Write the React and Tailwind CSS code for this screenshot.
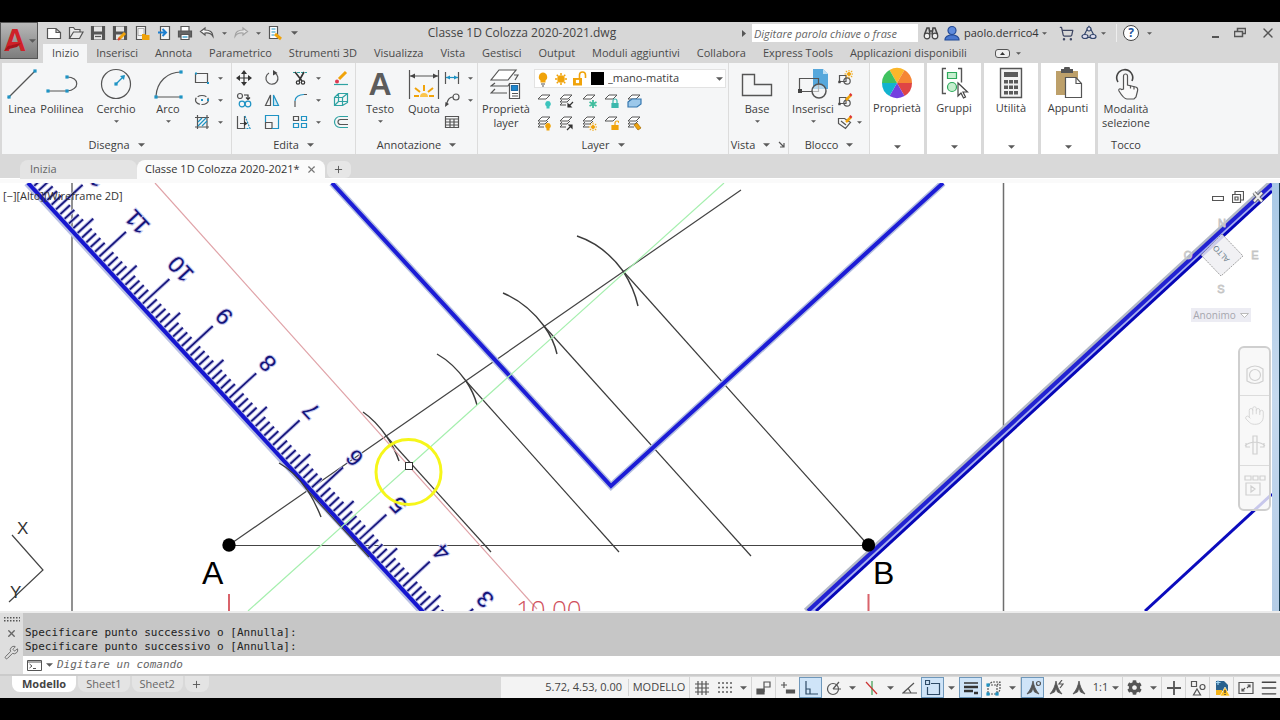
import React from 'react';
import { Wrench, X, Plus, Menu, ShoppingCart, Hand, Pointer } from 'lucide-react';
import { FaCog } from 'react-icons/fa';

const G = '#555';
const B = '#1f93c4';
const T = '#2fa3a3';
const O = '#f0a30a';

const Svg = ({ s = 16, children, className = '' }) => (
  <svg width={s} height={s} viewBox={`0 0 ${s} ${s}`} fill="none" stroke={G} strokeWidth="1.2" className={`shrink-0 ${className}`} aria-hidden="true">
    {children}
  </svg>
);

const Dot = ({ x, y, r = 1.6, c = B }) => (
  <rect x={x - r} y={y - r} width={r * 2} height={r * 2} fill={c} stroke="none" />
);

const Caret = ({ small }) => (
  <svg width={small ? 5 : 7} height={small ? 3 : 4} viewBox="0 0 8 4" fill="#5a5a5a" className="shrink-0" aria-hidden="true">
    <path d="M0 0h8L4 4z" />
  </svg>
);

// quick access toolbar
const NewFile = () => <Svg><path d="M1.5 3.5h8.5l4.5 4v6h-13zM10 3.5v4h4.5" fill="#fff" /></Svg>;
const OpenFile = () => <Svg><path d="M1.5 13.5v-11h4l1.5 2h5v3M1.5 13.5l4-6.5h9.5l-3.5 6.5z" fill="#e9e9e9" /></Svg>;
const Save = () => (
  <Svg><path d="M1.5 1.5h13v13h-13z" fill="#555" /><path d="M4 1.5h8v5H4zM4 9.5h8v5H4z" fill="#e4e4e4" stroke="none" /><path d="M5 11.5h6" /></Svg>
);
const SaveAs = () => (
  <Svg><path d="M1.5 1.5h13v13h-13z" fill="#555" /><path d="M4 1.5h8v5H4zM4 9.5h8v5H4z" fill="#e4e4e4" stroke="none" /><path d="M7 14l6-6" stroke={O} strokeWidth="3" /><path d="M6 15l2-2" stroke="#d43" strokeWidth="2" /></Svg>
);
const OpenWeb = () => (
  <Svg><path d="M2.5 1.5h9v13h-9z" fill="#f4f4f4" /><path d="M4 3.5h6v7H4z" stroke="#999" strokeWidth="0.8" /><path d="M8 9h3l1 1h3.5v5H8z" fill={O} stroke="none" /></Svg>
);
const SaveWeb = () => (
  <Svg><path d="M4.5 1.5h9v13h-9z" fill="#f4f4f4" /><path d="M2 7.5h7M6.500 4l3.500 3.500L6.500 11" stroke="#1d7fd0" strokeWidth="2" /></Svg>
);
const Print = () => (
  <Svg><path d="M4 6V1.5h8V6" fill="#fff" /><path d="M1.5 6h13v6h-13z" fill="#666" /><path d="M4 9.5h8v5H4z" fill="#fff" /><path d="M5.5 12h5" stroke={B} /></Svg>
);
const Undo = ({ off }) => (
  <Svg className={off ? '-scale-x-100 opacity-40' : ''}><path d="M6 3L1.5 6.5 6 10V8c3.5-.5 6 0 8 3.5C14 7 10.5 5 6 5z" fill="#f5f5f5" /></Svg>
);
const Match = () => (
  <Svg><path d="M2.5 1.5h8v12h-8z" fill="#fff" /><path d="M4.5 4h4M4.5 7h4M4.5 10h3" stroke={B} /><path d="M8 9l6 5" stroke={O} strokeWidth="3" /></Svg>
);

// draw
const LineIcon = () => <Svg s={32}><path d="M2 30L29 3" /><Dot x={3} y={29} /><Dot x={29} y={3} /></Svg>;
const PolyIcon = () => <Svg s={32}><path d="M2 23h19c13-1 13-14 0-14" /><Dot x={2} y={23} /><Dot x={21} y={23} /><Dot x={21} y={9} /></Svg>;
const CircleIcon = () => (
  <Svg s={32}><circle cx="16" cy="16" r="14.5" /><path d="M16 16l8-8" stroke={B} /><path d="M25 7l-1 5-4-4z" fill={B} stroke="none" /><Dot x={16} y={16} /></Svg>
);
const ArcIcon = () => <Svg s={32}><path d="M4 28C5 14 15 4 29 4M4 29h25" /><Dot x={4} y={29} /><Dot x={29} y={29} /><Dot x={29} y={4} /></Svg>;
const RectIcon = () => <Svg><path d="M1.5 3.5h12v9h-12z" /><Dot x={2} y={3.5} r={1} /><Dot x={14} y={13} r={1} /></Svg>;
const EllipseIcon = () => <Svg><ellipse cx="8" cy="8" rx="6.5" ry="4.5" strokeDasharray="9 1.5" /><Dot x={8} y={8} r={1} /><Dot x={14} y={8} r={1} /></Svg>;
const HatchIcon = () => <Svg><path d="M3.5 1v14M13 1v14M1 3.5h14M1 13h14" /><path d="M4 8l4-4M4 12l8-8M8 12l5-5" stroke={B} /></Svg>;

// modify
const MoveIcon = () => (
  <Svg><path d="M8 2v12M2 8h12" stroke="#333" /><path d="M8 0l3 4H5zM8 16l3-4H5zM0 8l4-3v6zM16 8l-4-3v6z" fill="#333" stroke="none" /></Svg>
);
const RotateIcon = () => <Svg><path d="M10.5 2.8A6 6 0 1 1 5 3" /><path d="M9 0v5.5L13.5 3z" fill="#444" stroke="none" /></Svg>;
const TrimIcon = () => (
  <Svg><path d="M1 2.5h14" stroke={T} strokeDasharray="3 1" /><path d="M3 2l7 9M12 2L7 11" stroke="#333" strokeWidth="1.6" /><circle cx="6" cy="12.5" r="1.7" stroke="#333" /><circle cx="11" cy="12.5" r="1.7" stroke="#333" /></Svg>
);
const CopyIcon = () => (
  <Svg><circle cx="4" cy="4" r="2.5" /><circle cx="6" cy="12" r="2.8" stroke={B} /><circle cx="12" cy="12" r="2.8" stroke={B} /><path d="M8 3h4v4M10 5.5l2 2 2-2" stroke="#333" /></Svg>
);
const MirrorIcon = () => <Svg><path d="M6.5 3v10.5H1.5z" /><path d="M9.5 3v10.5h5z" stroke={B} fill="#cfe9f5" /></Svg>;
const FilletIcon = () => <Svg><path d="M3 15V9M12 2.5h3" /><path d="M3 9c0-4 4-6.5 9-6.5" stroke={B} /></Svg>;
const StretchIcon = () => <Svg><path d="M1.5 2v12.5h7V2M4 9.5h5" /><path d="M8 7l3.5 2.5L8 12z" fill="#333" stroke="none" /><path d="M9 2l5 12.5H9" stroke={B} strokeDasharray="2 1" /></Svg>;
const ScaleIcon = () => <Svg><path d="M1.5 8.5h6.5v6H1.5z" /><path d="M1.5 8V1.5h13v13H8" stroke={B} /></Svg>;
const ArrayIcon = () => <Svg><path d="M1.5 2.5h5v4h-5z" /><path d="M9.5 2.5h5v4h-5zM1.5 9.5h5v4h-5zM9.5 9.5h5v4h-5z" stroke={B} /></Svg>;
const EraseIcon = () => <Svg><path d="M6 9l7-7" stroke={O} strokeWidth="3" /><circle cx="4" cy="11.5" r="2" fill="#dc3b52" stroke="none" /><path d="M1 14.5h14" stroke={T} /></Svg>;
const SolidIcon = () => <Svg><path d="M1.5 5.5h8v8h-8zM1.5 5.5l4-4h9v9l-5 3M9.5 5.5l5-4M5.5 1.5v8M5.5 9.5h9M5.5 9.5l-4 4" stroke={T} /></Svg>;
const OffsetIcon = () => <Svg><path d="M15 2.5H7a5.5 5.5 0 0 0 0 11h8" stroke={T} /><path d="M15 5.5H7.5a2.5 2.5 0 0 0 0 5H15" /></Svg>;

// annotate
const TextIcon = () => (
  <Svg s={32} className="overflow-visible"><text x="16" y="27" textAnchor="middle" fontSize="32" fontWeight="700" fontFamily="Liberation Sans, sans-serif" fill="#5c5c5c" stroke="none">A</text></Svg>
);
const DimIcon = () => (
  <Svg s={32}>
    <path d="M1.5 2v29M30.5 2v29M2 8h28" />
    <path d="M2 8l5-2.5v5zM30 8l-5-2.5v5z" fill="#444" stroke="none" />
    <path d="M6 28h5M21 28h5M7 20l5 4M25 20l-5 4M16 17v6" stroke={O} strokeWidth="2" />
    <path d="M12 29a4 4 0 0 1 8 0" fill="#fbc44a" stroke="none" />
  </Svg>
);
const LinearIcon = () => <Svg><path d="M1.5 2v12M14.5 2v12" /><path d="M2 7.5h12" stroke={B} /><path d="M2 7.5l4-2v4zM14 7.5l-4-2v4z" fill={B} stroke="none" /></Svg>;
const LeaderIcon = () => <Svg><circle cx="12" cy="5" r="3" /><path d="M9 5C5 5 4 8 2.5 12" /><path d="M1 15l.5-5 3.5 2z" fill="#444" stroke="none" /></Svg>;
const TableIcon = () => <Svg><path d="M1.5 2.5h13v11h-13zM1.5 5h13M1.5 8h13M1.5 11h13M6 5v8.5M10 5v8.5" /></Svg>;

// layers
const LayerPropsIcon = () => (
  <Svg s={32}>
    <path d="M9 2h17l-8 10H1z" fill="#fff" /><path d="M24 7h4l-3 5M5 15l-4 3h17l2-3M5 21l-4 4h16" />
    <path d="M19.5 15.5h10v15h-10z" fill="#fff" /><path d="M21.5 17.5h6v5h-6z" fill="#1d86cc" stroke="#1d6ca8" /><path d="M22 25.5h6M22 28h6" />
  </Svg>
);
const Layer = ({ many, children }) => (
  <Svg><g transform="translate(1 1)"><path d="M5 1h8l-4 4H1z" fill="#fff" strokeWidth="1" />{many && <path d="M3 6L1 8h7l3-3M3 9l-2 2h6" strokeWidth="1" />}</g>{children}</Svg>
);
const Mark = ({ c }) => <path d="M12 8a3 3 0 0 1 1.5 5.500v2h-3v-2A3 3 0 0 1 12 8z" fill={c} stroke="none" />;
const Flake = ({ c }) => <path d="M12 7v8M8.5 9l7 4M15.5 9l-7 4" stroke={c} strokeWidth="1.8" />;
const Lock = ({ c, open }) => <g stroke={c}><path d={open ? 'M12 10V8a2 2 0 0 1 4 0' : 'M10 10V8a2 2 0 0 1 4 0v2'} /><path d="M9 10.5h6v4H9z" fill={c} /></g>;
const ArrowMark = ({ up }) => <path d={up ? 'M9 15l4-4M11 10h3v3z' : 'M15 9l-4 4M10 11v3h3z'} stroke="#333" fill="#333" />;
const BoxMark = () => <path d="M2 9l4-3h9v5l-4 3H2z" fill="#9cc8ea" stroke="#3678b0" />;
const TagMark = () => <path d="M8 10l4 5 3-2-4-5z" fill={O} stroke="#a97310" strokeWidth="0.8" />;

const Sun = ({ x = 8, y = 8, r = 3 }) => (
  <g stroke={O} strokeWidth={r > 2 ? 1.5 : 1}>
    <circle cx={x} cy={y} r={r} fill={O} />
    {[0, 45, 90, 135, 180, 225, 270, 315].map((a) => (
      <path key={a} d={`M${x} ${y - r - 1}v-2`} transform={`rotate(${a} ${x} ${y})`} />
    ))}
  </g>
);

// block and view
const BaseIcon = () => <Svg s={32}><path d="M1.5 6.5h12v10h17v11h-29z" strokeWidth="1.4" /></Svg>;
const InsertIcon = () => (
  <Svg s={32}>
    <path d="M16 1h10l5 5v15H16z" fill="#56a8dc" stroke="none" /><path d="M26 1v5h5z" fill="#bfe0f4" stroke="none" />
    <path d="M2.5 10.5h19v13h-19z" /><circle cx="22" cy="23" r="7" fill="#f5f6f7" fillOpacity="0.6" strokeWidth="1.5" /><Dot x={3} y={23} c="#444" r={2} />
  </Svg>
);
const BlockBase = ({ children }) => <Svg><path d="M2.5 5.5H9v6H2.5z" /><circle cx="10" cy="11" r="3.2" /><Dot x={2.5} y={12} r={1.2} c="#444" />{children}</Svg>;
const Pencil = () => <><path d="M9 8l5-5" stroke={O} strokeWidth="2.5" /><path d="M13 3.5l1.500-1.500" stroke="#d33" strokeWidth="2.5" /></>;
const TagIcon = () => <Svg><path d="M1.5 4.5h6l6 4-5 6-7-5zM4 7l5 4" /><Pencil /></Svg>;

const wheel = ['#fbb62b', '#f58634', '#df4545', '#7440e0', '#12b3cf', '#3fc25f'];
const WheelIcon = () => (
  <Svg s={32}>
    {wheel.map((c, i) => (
      <path key={c} d="M16 16L8.5 3A15 15 0 0 1 23.5 3z" fill={c} stroke="none" transform={`rotate(${i * 60} 16 16)`} />
    ))}
  </Svg>
);
const GroupIcon = () => (
  <Svg s={32}>
    <path d="M8 1.5H4.5v25H8M20 1.5h3.5v14M20 26.5h2" strokeWidth="1.4" />
    <path d="M9.5 5.5h9v6h-9z" fill="#c6efcf" stroke="#2eaa5c" /><circle cx="14" cy="20" r="4.5" fill="#c6efcf" stroke="#2eaa5c" />
    <path d="M20 16v13l3-3 2.5 5 2-1-2.5-5h4.5z" fill="#fff" stroke="#444" />
  </Svg>
);
const CalcIcon = () => (
  <Svg s={32}>
    <path d="M5.5 1.5h21v29h-21z" fill="#f2f2f2" strokeWidth="1.4" /><path d="M9 5h14v5H9z" fill="#5a5a5a" stroke="none" />
    {[13, 18.5, 24].map((y) => [9, 14, 19].map((x) => <path key={`${x}-${y}`} d={`M${x} ${y}h4v3.5h-4z`} fill="#5a5a5a" stroke="none" />))}
  </Svg>
);
const ClipIcon = () => (
  <Svg s={32}>
    <path d="M4 4h22v24H4z" fill="#bda06a" stroke="none" /><path d="M9 2h3a3 3 0 0 1 6 0h3v4H9z" fill="#555" stroke="none" />
    <path d="M13.5 10.5H24l5.5 6v14h-16z" fill="#fff" /><path d="M24 10.5v6h5.5" />
  </Svg>
);

const bigW = { sm: 'w-10', md: 'w-12', lg: 'w-14' };
const Big = ({ icon, label, sub, caret, w = 'md' }) => (
  <button className={`${bigW[w]} flex flex-col items-center pt-[5px] text-[11px] leading-[14px]`}>
    {icon}
    <span className="mt-0.5">{label}</span>
    {sub && <span>{sub}</span>}
    {caret && <span className="pt-1"><Caret small /></span>}
  </button>
);

const Small = ({ icon, caret, label }) => (
  <button aria-label={label} className="flex h-[22px] items-center gap-2">
    {icon}
    {caret && <Caret small />}
  </button>
);

const Panel = ({ title, w, children, launcher }) => (
  <section className={`${w} flex shrink-0 flex-col border-r border-[#dcdcdc] bg-[#f5f6f7]`}>
    <div className="flex flex-1">{children}</div>
    <h2 className="flex h-[18px] items-center justify-center gap-2 text-[11px]">
      {title}
      <Caret />
      {launcher && <Svg s={8}><path d="M1 1l5 5M6 2v4H2" /></Svg>}
    </h2>
  </section>
);

const DropPanel = ({ icon, label }) => (
  <button className="mr-[3px] flex w-[54px] shrink-0 flex-col items-center bg-white pt-1 pb-[5px] text-[11px] leading-[14px]">
    {icon}
    <span className="mt-0.5 flex-1">{label}</span>
    <Caret />
  </button>
);

const menuTabs = ['Inizio', 'Inserisci', 'Annota', 'Parametrico', 'Strumenti 3D', 'Visualizza', 'Vista', 'Gestisci', 'Output', 'Moduli aggiuntivi', 'Collabora', 'Express Tools', 'Applicazioni disponibili'];

const quick = [
  ['Nuovo', <NewFile />], ['Apri', <OpenFile />], ['Salva', <Save />], ['Salva con nome', <SaveAs />],
  ['Apri da Web', <OpenWeb />], ['Salva su Web', <SaveWeb />], ['Stampa', <Print />], ['Annulla', <Undo />],
];

const Header = () => (
  <header className="flex bg-[#d7d7d7]">
    <button aria-label="Menu applicazione" className="flex h-[37px] w-[38px] shrink-0 items-center justify-center border border-[#555] bg-gradient-to-b from-[#b9b9b9] to-[#7d7d7d]">
      <svg width="27" height="35" viewBox="0 0 27 35" className="overflow-visible" aria-hidden="true">
        <text x="13" y="28" textAnchor="middle" fontSize="31" fontWeight="700" fontFamily="Liberation Sans, sans-serif" fill="#cf2229">A</text>
        <path d="M2 28l4-5 13-3-4 4-8 2z" fill="#a5151c" />
      </svg>
      <Caret />
    </button>
    <div className="min-w-0 flex-1">
      <div className="flex h-[22px] items-center">
        <div className="flex w-[264px] shrink-0 items-center pl-[5px]">
          {quick.map(([label, icon]) => (
            <button key={label} aria-label={label} className="flex w-[22px] justify-center">{icon}</button>
          ))}
          <span className="flex w-3 justify-center"><Caret small /></span>
          <button aria-label="Ripeti" className="flex w-[22px] justify-center"><Undo off /></button>
          <span className="flex w-3 justify-center"><Caret small /></span>
          <button aria-label="Corrispondenza" className="flex w-[22px] justify-center"><Match /></button>
          <button aria-label="Personalizza" className="flex w-4 justify-center"><Caret /></button>
        </div>
        <h1 className="flex-1 text-center text-[12px] text-[#444]">Classe 1D Colozza 2020-2021.dwg</h1>
        <div className="flex w-[538px] shrink-0 items-center">
          <svg width="4" height="7" viewBox="0 0 4 7" aria-hidden="true"><path d="M0 0l4 3.5L0 7z" fill="#555" /></svg>
          <input aria-label="Cerca" placeholder="Digitare parola chiave o frase" className="ml-1.5 h-[18px] w-[166px] bg-white px-0.5 text-[11px] italic outline-none placeholder:text-[#666]" />
          <button aria-label="Trova" className="ml-1 flex w-[18px] justify-center">
            <Svg><path d="M1.5 9.5L4 3h2l1 6.5M14.5 9.5L12 3h-2L9 9.5M7 6h2" stroke="#444" strokeWidth="1.6" /><circle cx="4" cy="11" r="2.8" fill="#eee" stroke="#444" /><circle cx="12" cy="11" r="2.8" fill="#eee" stroke="#444" /></Svg>
          </button>
          <button className="ml-1 flex w-[98px] items-center gap-1 text-[11px] text-[#333]">
            <Svg><path d="M1 15c0-4 3-4 5-5h4c2 1 5 1 5 5z" fill="#4a78cf" stroke="#234a96" /><circle cx="8" cy="5.5" r="4" fill="#5f8bdc" stroke="#234a96" /></Svg>
            paolo.derrico4
          </button>
          <span className="mr-2"><Caret small /></span>
          <button aria-label="Carrello" className="ml-1 w-4"><ShoppingCart size={15} color="#3f4763" /></button>
          <button aria-label="Autodesk" className="ml-1.5 w-4">
            <Svg><path d="M8 1.5l3 5 3 6H2l3-6z" stroke="#33466b" /><circle cx="8" cy="4" r="2" fill="#dde" stroke="#33466b" /><ellipse cx="4" cy="11.5" rx="3" ry="2" fill="#dde" stroke="#33466b" /><ellipse cx="12" cy="11.5" rx="3" ry="2" fill="#dde" stroke="#33466b" /></Svg>
          </button>
          <span className="ml-1"><Caret small /></span>
          <span className="ml-2.5 h-[18px] w-px bg-[#eee]" />
          <button aria-label="Guida" className="ml-1.5 flex h-4 w-4 items-center justify-center rounded-full border border-[#444] bg-white text-[12px] font-bold text-[#23539c]">?</button>
          <span className="ml-2"><Caret small /></span>
          <div className="ml-auto flex items-center gap-3.5 pr-1">
            <button aria-label="Riduci" className="pt-2"><Svg s={8}><path d="M0 4h7" strokeWidth="2" /></Svg></button>
            <button aria-label="Ripristina"><Svg s={12}><path d="M3.5 4V1.5h8v5H9M.5 4.5h8v5h-8z" strokeWidth="1.5" /></Svg></button>
            <button aria-label="Chiudi"><X size={16} color="#555" /></button>
          </div>
        </div>
      </div>
      <nav className="flex h-[19px] items-center pl-[5px]">
        {menuTabs.map((t, i) => (
          <button key={t} className={`h-[19px] whitespace-nowrap pr-2 pl-[9px] text-[11px] text-[#4a4a4a] ${i === 0 ? 'bg-[#f5f6f7]' : ''}`}>{t}</button>
        ))}
        <button aria-label="Riduci barra" className="ml-5 flex items-center gap-1.5">
          <svg width="15" height="9" viewBox="0 0 15 9" aria-hidden="true"><rect x="0.5" y="0.5" width="14" height="8" rx="2.5" fill="#eee" stroke="#555" /><path d="M5 6l2.5-3L10 6z" fill="#333" /></svg>
          <Caret small />
        </button>
      </nav>
    </div>
  </header>
);

const layerTools = [
  <Layer><Mark c="#3cc4bd" /></Layer>, <Layer many><ArrowMark /></Layer>, <Layer><Flake c="#3fbd9d" /></Layer>, <Layer><Lock c="#3cb8ad" /></Layer>, <Layer many><BoxMark /></Layer>,
  <Layer many><Mark c={O} /></Layer>, <Layer many><ArrowMark up /></Layer>, <Layer many><Sun x={12} y={12} r={1.5} /></Layer>, <Layer><Lock c={O} open /></Layer>, <Layer many><TagMark /></Layer>,
];

const Ribbon = () => (
  <div className="flex h-[91px] bg-[#d9d9d9] pr-0.5 pl-0.5 text-[#3c3c3c]">
    <Panel title="Disegna" w="w-[230px]">
      <Big icon={<LineIcon />} label="Linea" w="sm" />
      <Big icon={<PolyIcon />} label="Polilinea" w="sm" />
      <span className="w-1.5" />
      <Big icon={<CircleIcon />} label="Cerchio" caret w="lg" />
      <Big icon={<ArcIcon />} label="Arco" caret w="md" />
      <div className="ml-0.5 pt-1">
        <Small label="Rettangolo" icon={<RectIcon />} caret />
        <Small label="Ellisse" icon={<EllipseIcon />} caret />
        <Small label="Tratteggio" icon={<HatchIcon />} caret />
      </div>
    </Panel>
    <Panel title="Edita" w="w-[124px]">
      <div className="flex gap-3 pt-1 pl-1">
        <div>
          <Small label="Sposta" icon={<MoveIcon />} /><Small label="Copia" icon={<CopyIcon />} /><Small label="Stira" icon={<StretchIcon />} />
        </div>
        <div>
          <Small label="Ruota" icon={<RotateIcon />} /><Small label="Specchio" icon={<MirrorIcon />} /><Small label="Scala" icon={<ScaleIcon />} />
        </div>
        <div>
          <Small label="Taglia" icon={<TrimIcon />} caret /><Small label="Raccorda" icon={<FilletIcon />} caret /><Small label="Serie" icon={<ArrayIcon />} caret />
        </div>
        <div>
          <Small label="Cancella" icon={<EraseIcon />} /><Small label="Esplodi" icon={<SolidIcon />} /><Small label="Offset" icon={<OffsetIcon />} />
        </div>
      </div>
    </Panel>
    <Panel title="Annotazione" w="w-[122px]">
      <Big icon={<TextIcon />} label="Testo" caret w="md" />
      <Big icon={<DimIcon />} label="Quota" w="sm" />
      <div className="pt-1">
        <Small label="Lineare" icon={<LinearIcon />} caret />
        <Small label="Direttrice" icon={<LeaderIcon />} caret />
        <Small label="Tabella" icon={<TableIcon />} />
      </div>
    </Panel>
    <Panel title="Layer" w="w-[251px]">
      <Big icon={<LayerPropsIcon />} label="Proprietà" sub="layer" w="lg" />
      <div className="flex-1 pr-0.5">
        <div className="mt-1.5 mb-0.5 flex h-[19px] items-center gap-0.5 border border-[#e2e2e2] bg-white">
          <Svg><path d="M8 1.5a4.5 4.5 0 0 1 2.5 8v2h-5v-2a4.5 4.500 0 0 1 2.5-8z" fill={O} stroke="none" /><path d="M6 13h4M7 15h2" /></Svg>
          <Svg><Sun r={3} /></Svg>
          <Svg><path d="M8.5 7V4a3 3 0 0 1 6 0v3" stroke={O} strokeWidth="1.6" /><path d="M2 7h9v7.5H2z" fill={O} stroke="none" /><Dot x={6.5} y={10.5} c="#fff" /></Svg>
          <span className="ml-0.5 h-[13px] w-[13px] bg-black" />
          <select aria-label="Layer corrente" className="ml-0.5 min-w-0 flex-1 appearance-none bg-transparent text-[11px] outline-none">
            <option>_mano-matita</option>
          </select>
          <span className="pr-0.5"><Caret /></span>
        </div>
        <div className="grid w-28 grid-cols-5">
          {layerTools.map((icon, i) => (
            <button key={i} aria-label={`Strumento layer ${i + 1}`} className="flex h-[22px] items-center pl-0.5">{icon}</button>
          ))}
        </div>
      </div>
    </Panel>
    <Panel title="Vista" w="w-[60px]" launcher>
      <Big icon={<BaseIcon />} label="Base" caret w="lg" />
    </Panel>
    <Panel title="Blocco" w="w-[81px]">
      <Big icon={<InsertIcon />} label="Inserisci" caret w="md" />
      <div className="pt-1">
        <Small label="Crea" icon={<BlockBase><Sun x={12} y={4} r={1.5} /></BlockBase>} />
        <Small label="Modifica" icon={<BlockBase><Pencil /></BlockBase>} />
        <div className="flex h-[22px] items-center"><Small label="Attributi" icon={<TagIcon />} /><span className="pl-1"><Caret small /></span></div>
      </div>
    </Panel>
    <DropPanel icon={<WheelIcon />} label="Proprietà" />
    <DropPanel icon={<GroupIcon />} label="Gruppi" />
    <DropPanel icon={<CalcIcon />} label="Utilità" />
    <DropPanel icon={<ClipIcon />} label="Appunti" />
    <div className="min-w-0 flex-1 bg-[#f5f6f7]">
      <section className="flex h-full w-14 flex-col">
        <div className="flex flex-1 justify-center">
          <button className="flex flex-col items-center pt-[5px] text-[11px] leading-[14px]">
            <Svg s={32}>
              <path d="M8 14a8 8 0 1 1 14-1" stroke="#444" strokeWidth="1.6" />
              <path d="M13.500 21V8a2 2 0 0 1 4 0v9l8 2c2 .5 2.500 2 2 4l-1.500 6-2 2h-7c-3 0-5-3-8-8-1-2 1-3 2.500-1.500z" fill="#fafafa" />
              <path d="M20.500 17.500v3M24 18.500v3" />
            </Svg>
            <span className="mt-0.5">Modalità</span>
            <span>selezione</span>
          </button>
        </div>
        <h2 className="flex h-[18px] items-center justify-center text-[11px]">Tocco</h2>
      </section>
    </div>
  </div>
);

const FileTabs = () => (
  <div className="bg-[#d9d9d9] pt-1.5">
    <div className="flex h-[19px] items-center border-b border-white pl-5 text-[11px]">
      <button className="h-[19px] w-[117px] rounded-t-lg bg-[#e4e4e4] pl-2.5 text-left text-[#666]">Inizia</button>
      <button className="flex h-[19px] items-center gap-1.5 rounded-t-lg bg-[#fbfbfb] px-2 text-[#333]">
        Classe 1D Colozza 2020-2021* <X size={11} strokeWidth={2.5} color="#777" />
      </button>
      <button aria-label="Nuovo disegno" className="ml-0.5 flex h-[17px] w-6 items-center justify-center rounded-md bg-[#e6e6e6]"><Plus size={11} color="#555" /></button>
    </div>
    <div className="h-1 bg-[#fafafa]" />
  </div>
);

// ruler ticks: ten per unit, every fifth and tenth one longer
const numerals = [12, 11, 10, 9, 8, 7, 6, 5, 4, 3];
const ticks = Array.from({ length: 110 }, (_, i) => {
  const k = i - 20;
  const x = 97.3 + k * 4.34;
  const y = 258.4 + k * 4.71;
  const len = k % 10 === 0 ? 39 : k % 5 === 0 ? 24 : 16;
  return { x, y, x2: x + len * 0.735, y2: y - len * 0.678 };
});

const arms = ['M623 271L868 545', 'M544 326L751 556', 'M466 381L619 552', 'M387 437L491 552', 'M308 491L369 557'];
const arcs = [
  'M577 236Q604 245 623 271Q634 288 638 306', 'M503 293Q527 303 544 326Q554 340 557 354', 'M437 354Q453 363 466 381Q474 393 477 405',
  'M363 412Q376 421 387 437Q395 449 399 461', 'M279 463Q294 471 308 491Q316 504 321 517',
];

const Drawing = () => (
  <svg viewBox="0 183 1272 428" preserveAspectRatio="xMinYMin slice" className="block h-full w-full" fill="none">
    <path d="M72 183V611M1003.5 183V611" stroke="#6e6e6e" strokeWidth="1.5" />
    <path d="M229 545L741 190M229 545.5H868" stroke="#444" strokeWidth="1.2" />

    <g stroke="#b9b9e6" strokeWidth="3.6">
      {ticks.map((t, i) => <line key={i} x1={t.x} y1={t.y} x2={t.x2} y2={t.y2} />)}
    </g>
    <g stroke="#14147a" strokeWidth="1.7">
      {ticks.map((t, i) => <line key={i} x1={t.x} y1={t.y} x2={t.x2} y2={t.y2} />)}
    </g>
    <path d="M27 183L423 613" stroke="#b9c0e4" strokeWidth="7" />
    <path d="M28 183L424 613" stroke="#1616d0" strokeWidth="4" />
    {numerals.map((n) => (
      <text
        key={n}
        transform={`translate(${137 + (11 - n) * 43.5} ${222 + (11 - n) * 47.2}) rotate(227.3)`}
        y="8"
        textAnchor="middle"
        fontSize="23"
        fontFamily="Liberation Sans, sans-serif"
        fill="#14147a"
        stroke="#c9c9ee"
        strokeWidth="2"
        paintOrder="stroke"
      >
        {n}
      </text>
    ))}
    {arms.map((d) => <path key={d} d={d} stroke="#3c3c3c" strokeWidth="1.2" />)}
    {arcs.map((d) => <path key={d} d={d} stroke="#3c3c3c" strokeWidth="1.4" />)}

    <path d="M332 183L611 486L943 183" stroke="#b4bfe0" strokeWidth="7" />
    <path d="M332 183L611 486L943 183" stroke="#1c1cd6" strokeWidth="4" />
    <path d="M806 611L1272 182" stroke="#b3b9c6" strokeWidth="6" />
    <path d="M811 611L1272 187" stroke="#a9b0f0" strokeWidth="6" />
    <path d="M808 611L1272 184" stroke="#2222d2" strokeWidth="4" />
    <path d="M816 611L1272 191" stroke="#0606b8" strokeWidth="3" />
    <path d="M1145 611L1272 494" stroke="#0b0bbd" strokeWidth="3" />

    <path d="M155 183L537 609" stroke="#e0a3a8" strokeWidth="1.2" />
    <path d="M248 611L724 183" stroke="#a5efae" strokeWidth="1.2" />
    <path d="M229 594V611M868.5 594V611" stroke="#d9636b" strokeWidth="2" />
    <text x="516" y="619" fontSize="26" fontWeight="300" fontFamily="Open Sans, sans-serif" fill="#d0505c">10.00</text>

    <circle cx="229" cy="545" r="6.7" fill="#000" />
    <circle cx="868.5" cy="545" r="6.7" fill="#000" />
    <text x="202" y="584" fontSize="32" fontFamily="Liberation Sans, sans-serif" fill="#000">A</text>
    <text x="873" y="584" fontSize="32" fontFamily="Liberation Sans, sans-serif" fill="#000">B</text>

    <circle cx="408.5" cy="472" r="32.5" stroke="#f6f61a" strokeWidth="3" />
    <rect x="405.5" y="462.5" width="7" height="7" fill="#fff" stroke="#333" />

    <path d="M12 535L43 570L9 602" stroke="#444" strokeWidth="1.2" />
    <text x="17" y="534" fontSize="17" fontFamily="Liberation Sans, sans-serif" fill="#333">X</text>
    <text x="10" y="598" fontSize="17" fontFamily="Liberation Sans, sans-serif" fill="#333">Y</text>
  </svg>
);

const ViewCube = () => (
  <svg width="80" height="86" viewBox="0 0 80 86" fontFamily="Liberation Sans, sans-serif" fontSize="11" fill="#f2f2f2" stroke="#c4c4c4" strokeWidth="0.8" textAnchor="middle" aria-hidden="true">
    <text x="40" y="13">N</text>
    <text x="6" y="45">O</text>
    <text x="73" y="45">E</text>
    <text x="39" y="79">S</text>
    <path d="M40 20L61 42L39 62L19 41z" fill="#efeff2" fillOpacity="0.85" stroke="#8a8a8a" strokeDasharray="2 1" />
    <text transform="translate(39 40) rotate(227)" y="3" fontSize="8" fill="#6f7f8c" stroke="none">ALTO</text>
  </svg>
);

const NavBar = () => (
  <div className="flex h-[165px] w-[33px] flex-col items-center justify-around rounded-md border-2 border-[#cfcfcf] bg-[#f6f6f6]/80 pt-3 pb-2 text-[#d2d2d2]">
    <button aria-label="Ruota di navigazione"><Svg s={22}><g stroke="#d0d0d0"><path d="M3 5q8-6 16 0v12q-8 5-16 0z" /><circle cx="11" cy="11" r="5.5" /></g></Svg></button>
    <span className="h-px w-full bg-[#dcdcdc]" />
    <button aria-label="Pan"><Hand size={21} strokeWidth={1} /></button>
    <button aria-label="Zoom"><Svg s={22}><g stroke="#d0d0d0"><path d="M9 2h4v18H9zM1 12c4-5 16-5 20 0M2 9v4h4M20 9v4h-4" /></g></Svg></button>
    <span className="h-px w-full bg-[#dcdcdc]" />
    <button aria-label="Motion"><Svg s={22}><g stroke="#d0d0d0"><path d="M1 1h6v4H1zM9 1h5v4H9zM16 1h5v4h-5zM2 8h14v12H2zM7 11l4 3-4 3z" /></g></Svg></button>
  </div>
);

const Canvas = () => (
  <main className="relative flex min-h-0 flex-1 bg-white">
    <div className="min-w-0 flex-1 overflow-hidden"><Drawing /></div>
    <div className="w-[7px] bg-gradient-to-b from-[#a9c9e6] via-[#c5d9ee] to-[#b4cce6]" />
    <div className="w-px bg-[#173c50]" />
    <div className="absolute top-1.5 left-[3px] flex text-[11px] leading-[14px] text-[#333]">
      <button>[−]</button><button>[Alto]</button><button>[Wireframe 2D]</button>
    </div>
    <div className="absolute top-2 right-4 flex items-center gap-2">
      <button aria-label="Riduci vista"><Svg s={12}><path d="M.5 5.5h11v4H.5z" fill="#fff" /></Svg></button>
      <button aria-label="Ingrandisci vista"><Svg s={12}><path d="M3 3V.5h8.5V9H9M.5 3.5h8v8h-8zM3 6h3v3H3z" fill="#fff" /></Svg></button>
      <button aria-label="Chiudi vista"><Svg s={12}><path d="M2 1.5l8 9M10 1.5l-8 9" stroke="#666" strokeWidth="4" /><path d="M2 1.5l8 9M10 1.5l-8 9" stroke="#eee" strokeWidth="2" /></Svg></button>
    </div>
    <div className="absolute top-[31px] right-[18px]"><ViewCube /></div>
    <button className="absolute top-[125px] right-[29px] flex h-[14px] w-[60px] items-center justify-center gap-1 bg-[#ececf3] text-[10px] text-[#a6a6ae]">
      Anonimo <svg width="9" height="5" viewBox="0 0 9 5" fill="#fff" stroke="#bbb" aria-hidden="true"><path d="M.5.5h8L4.5 4.5z" /></svg>
    </button>
    <div className="absolute top-[163px] right-[9px]"><NavBar /></div>
  </main>
);

const CommandLine = () => (
  <section className="flex border-t-2 border-[#ececec] bg-[#c6c6c6]">
    <div className="flex w-[23px] shrink-0 flex-col items-center gap-1.5 bg-[#dedede] pt-1">
      <svg width="16" height="5" viewBox="0 0 16 5" fill="#555" aria-hidden="true">
        {[0, 3, 6, 9, 12, 15].map((x) => <path key={x} d={`M${x} 0h1.500v1.500h-1.500zM${x} 3h1.500v1.500h-1.500z`} />)}
      </svg>
      <button aria-label="Chiudi riga di comando"><X size={11} strokeWidth={3} color="#666" /></button>
      <button aria-label="Opzioni"><Wrench size={15} strokeWidth={1.5} color="#666" /></button>
    </div>
    <div className="min-w-0 flex-1 font-['DejaVu_Sans_Mono',monospace] text-[11px] text-[#222]">
      <div className="px-0.5 pt-[13px] pb-0.5 leading-[14px]">
        <p>Specificare punto successivo o [Annulla]:</p>
        <p>Specificare punto successivo o [Annulla]:</p>
      </div>
      <div className="flex h-[18px] items-center gap-1 bg-white pl-1">
        <svg width="15" height="11" viewBox="0 0 15 11" fill="none" stroke="#555" aria-hidden="true"><path d="M.5.5h14v10H.5zM.5 2h14M2.5 4l2.5 2-2.5 2M6 8.5h3" /></svg>
        <Caret />
        <input aria-label="Comando" placeholder="Digitare un comando" className="min-w-0 flex-1 bg-white italic outline-none placeholder:text-[#666]" />
      </div>
    </div>
  </section>
);

const Scale = ({ mark }) => (
  <Svg><path d="M8 1c1 5 2.5 9 6 13l-4.5-2L8 8l-1.5 4L2 14C5.5 10 7 6 8 1z" fill="#555" stroke="#555" strokeWidth="0.8" />{mark}</Svg>
);

const status = [
  { id: 'Griglia', icon: <Svg><path d="M4 1v14M8 1v14M12 1v14M1 4h14M1 8h14M1 12h14" /></Svg> },
  { id: 'Snap', icon: <Svg>{[3, 7, 11, 15].map((x) => [3, 7.5, 12].map((y) => <Dot key={`${x}${y}`} x={x - 1} y={y} r={0.8} c="#444" />))}</Svg>, caret: true, end: true },
  { id: 'Vincoli', icon: <Svg><path d="M1 9h7v5H1z" fill="#555" /><path d="M8 12V2h6v5H8" /></Svg>, end: true },
  { id: 'Input dinamico', icon: <Svg><path d="M1 5h6M4 2v6" /><path d="M6.5 10h8v3h-8z" fill="#555" /></Svg> },
  { id: 'Orto', on: true, icon: <Svg><path d="M3 1v13h12M3 9h4v5" stroke="#2d4a66" /></Svg> },
  { id: 'Polare', icon: <Svg><circle cx="7" cy="9" r="5.5" /><path d="M7 9h8M7 9l6-7" /></Svg>, caret: true },
  { id: 'Assonometria', icon: <Svg><path d="M8 1v14" stroke="#3a9c50" /><path d="M2 2l11 12" stroke="#c33" /></Svg>, caret: true },
  { id: 'Puntamento', icon: <Svg><path d="M15 13H1L12 3M6 8l3 5" /></Svg> },
  { id: 'Snap ad oggetto', on: true, icon: <Svg><path d="M6 3.5h8.5v11h-12V7" stroke="#2d4a66" /><path d="M.5.5h4v4h-4z" stroke="#2d4a66" /></Svg>, caret: true },
  { id: 'Spessore', on: true, icon: <Svg><path d="M1 3h14" stroke="#333" strokeWidth="1.5" /><path d="M1 7h14M1 11h9M11 13h4" stroke="#333" strokeWidth="2.5" /></Svg> },
  { id: 'Snap 3D', icon: <Svg><path d="M2 5l4-3h8v8l-3 4H2zM2 5h9v9M11 5l3-3" strokeDasharray="2 1" /><Dot x={2} y={5} /><Dot x={11} y={14} /><Dot x={2} y={14} /></Svg>, caret: true, end: true },
  { id: 'Visibilità annotazioni', on: true, icon: <Scale mark={<circle cx="13.5" cy="3.5" r="2" />} /> },
  { id: 'Scala automatica', icon: <Scale mark={<path d="M14 0l-3 4h4l-3 4" />} /> },
  { id: 'Scala annotazione', icon: <Scale />, text: '1:1', end: true },
  { id: 'Area di lavoro', icon: <FaCog size={15} color="#555" />, caret: true, end: true },
  { id: 'Monitor', icon: <Svg><path d="M8 1v14M1 8h14" strokeWidth="1.8" /></Svg>, end: true },
  { id: 'Isola oggetti', icon: <Svg><path d="M1.5 1.5h5v5h-5zM7 9l3.5 6h-7z" /><circle cx="12.5" cy="7" r="2.5" /></Svg>, end: true },
  { id: 'Prestazioni', icon: <Svg><path d="M2 1h8l4 4v6H2z" fill="#28618e" stroke="none" /><path d="M4 0v5M1.5 2.5h5" stroke="#9fd3f2" /><path d="M2 10h6v5H2z" fill="#f5b51c" stroke="none" /><path d="M11 7l5 9H6z" fill="#fbc021" stroke="#fff" strokeWidth="0.6" /><path d="M11 10v3M11 14v1" stroke="#333" /></Svg>, end: true },
  { id: 'Schermo intero', icon: <Svg><path d="M1 2.5h14v11H1zM4 11l3-3M4 8.5V11h2.5M12 5L9 8M9.5 5H12v2.5" /></Svg> },
  { id: 'Personalizzazione', icon: <Menu size={20} strokeWidth={1.7} color="#444" /> },
];

const StatusBar = () => (
  <footer className="flex h-[24px] items-end border-t-2 border-[#cbcbcb] bg-[#d9d9d9] text-[11px] text-[#444]">
    <div className="flex flex-1 items-start self-stretch pl-3">
      <button className="h-4 rounded-b-lg bg-white px-2.5 leading-4 font-bold">Modello</button>
      <button className="ml-0.5 h-4 rounded-b-lg bg-[#e4e4e4] px-2 leading-4 text-[#666]">Sheet1</button>
      <button className="ml-0.5 h-4 rounded-b-lg bg-[#e4e4e4] px-2 leading-4 text-[#666]">Sheet2</button>
      <button aria-label="Nuovo layout" className="ml-0.5 flex h-4 w-6 items-center justify-center rounded-b-lg bg-[#e4e4e4]"><Plus size={11} color="#555" /></button>
    </div>
    <div className="flex h-[21px] shrink-0 items-center bg-[#f3f3f3]">
      <span className="w-32 border-r border-[#d4d4d4] pr-1.5 text-right">5.72, 4.53, 0.00</span>
      <button className="h-full w-[61px] border-r border-[#d4d4d4]">MODELLO</button>
      {status.map((s) => (
        <div key={s.id} className={`flex h-full items-center ${s.end ? 'border-r border-[#d4d4d4]' : ''}`}>
          <button aria-label={s.id} className={`flex h-full w-[23px] items-center justify-center ${s.on ? 'border border-[#6f98bb] bg-[#cfe4f8]' : ''}`}>{s.icon}</button>
          {s.text && <button className="flex w-8 items-center justify-center gap-1">{s.text} <Caret /></button>}
          {s.caret && <span className="flex w-[15px] justify-center"><Caret /></span>}
        </div>
      ))}
    </div>
  </footer>
);

const App = () => {
  return (
    <div className="flex h-screen flex-col overflow-hidden bg-black py-[22px] font-['Open_Sans',sans-serif]">
      <Header />
      <Ribbon />
      <FileTabs />
      <Canvas />
      <CommandLine />
      <StatusBar />
    </div>
  );
};

export default App;
